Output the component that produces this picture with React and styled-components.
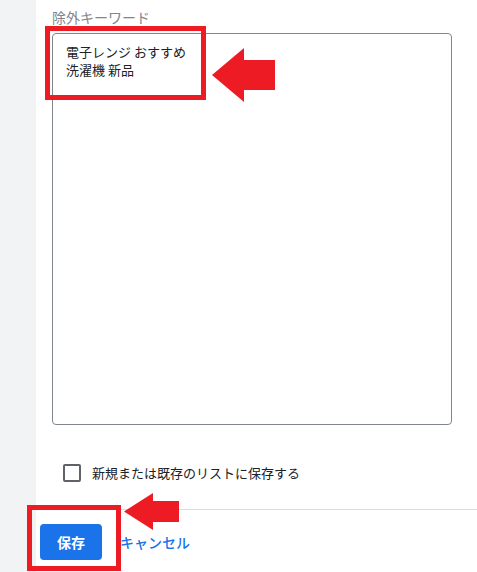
import React from "react";
import styled, { createGlobalStyle } from "styled-components";

const GlobalStyle = createGlobalStyle`
  html, body {
    margin: 0;
    padding: 0;
    background: #ffffff;
  }
  body {
    font-family: "Noto Sans CJK JP", "Noto Sans", sans-serif;
    color: #202124;
  }
`;

const Page = styled.div`
  position: relative;
  display: flex;
  width: 477px;
  height: 572px;
  overflow: hidden;
`;

const Sidebar = styled.div`
  width: 36px;
  flex-shrink: 0;
  background: #f1f3f4;
`;

const Main = styled.div`
  flex: 1;
  display: flex;
  flex-direction: column;
`;

const Field = styled.div`
  display: flex;
  flex-direction: column;
  padding: 7px 0 0 16px;
`;

const Label = styled.label`
  font-size: 14px;
  line-height: 20px;
  color: #80868b;
  margin-bottom: 6px;
`;

const TextArea = styled.textarea`
  box-sizing: border-box;
  width: 400px;
  height: 392px;
  margin: 0;
  padding: 9px 13px;
  border: 1px solid #80868b;
  border-radius: 4px;
  font-family: inherit;
  font-size: 13px;
  line-height: 18px;
  color: #202124;
  resize: none;
  outline: none;
`;

const CheckRow = styled.label`
  display: flex;
  align-items: center;
  gap: 11px;
  margin: 38px 0 0 27px;
  font-size: 13px;
  line-height: 20px;
  color: #202124;
`;

const Box = styled.span`
  box-sizing: border-box;
  width: 18px;
  height: 18px;
  border: 2px solid #5f6368;
  border-radius: 2px;
`;

const Divider = styled.hr`
  margin: 26px 0 0;
  border: 0;
  border-top: 1px solid #dadce0;
`;

const Footer = styled.div`
  display: flex;
  align-items: center;
  gap: 18px;
  padding: 14px 0 0 4px;
`;

const PrimaryButton = styled.button`
  height: 36px;
  padding: 0 17px;
  border: 0;
  border-radius: 4px;
  background: #1a73e8;
  color: #ffffff;
  font-family: inherit;
  font-size: 14px;
  font-weight: 700;
`;

const TextButton = styled.button`
  padding: 0;
  border: 0;
  background: none;
  color: #1a73e8;
  font-family: inherit;
  font-size: 14px;
  font-weight: 500;
`;

const Highlight = styled.div`
  position: absolute;
  box-sizing: border-box;
  border: 5px solid #ed1c24;
  left: ${(p) => p.x}px;
  top: ${(p) => p.y}px;
  width: ${(p) => p.w}px;
  height: ${(p) => p.h}px;
`;

const ArrowMark = styled.svg`
  position: absolute;
  left: ${(p) => p.x}px;
  top: ${(p) => p.y}px;
`;

function Arrow({ x, y, w, h, headW, shaftTop, shaftBottom }) {
  const mid = h / 2;
  const d = `M0 ${mid} L${headW} 0 L${headW} ${shaftTop} L${w} ${shaftTop} L${w} ${shaftBottom} L${headW} ${shaftBottom} L${headW} ${h} Z`;
  return (
    <ArrowMark x={x} y={y} width={w} height={h} viewBox={`0 0 ${w} ${h}`}>
      <path d={d} fill="#ed1c24" />
    </ArrowMark>
  );
}

export default function App() {
  return (
    <>
      <GlobalStyle />
      <Page>
        <Sidebar />
        <Main>
          <Field>
            <Label>除外キーワード</Label>
            <TextArea defaultValue={"電子レンジ おすすめ\n洗濯機 新品"} />
          </Field>
          <CheckRow>
            <Box />
            新規または既存のリストに保存する
          </CheckRow>
          <Divider />
          <Footer>
            <PrimaryButton>保存</PrimaryButton>
            <TextButton>キャンセル</TextButton>
          </Footer>
        </Main>

        <Highlight x={45} y={26} w={161} h={74} />
        <Arrow x={212} y={48} w={63} h={54} headW={32} shaftTop={12} shaftBottom={42} />

        <Highlight x={27} y={505} w={94} h={66} />
        <Arrow x={124} y={493} w={55} h={37} headW={29} shaftTop={8} shaftBottom={29} />
      </Page>
    </>
  );
}
